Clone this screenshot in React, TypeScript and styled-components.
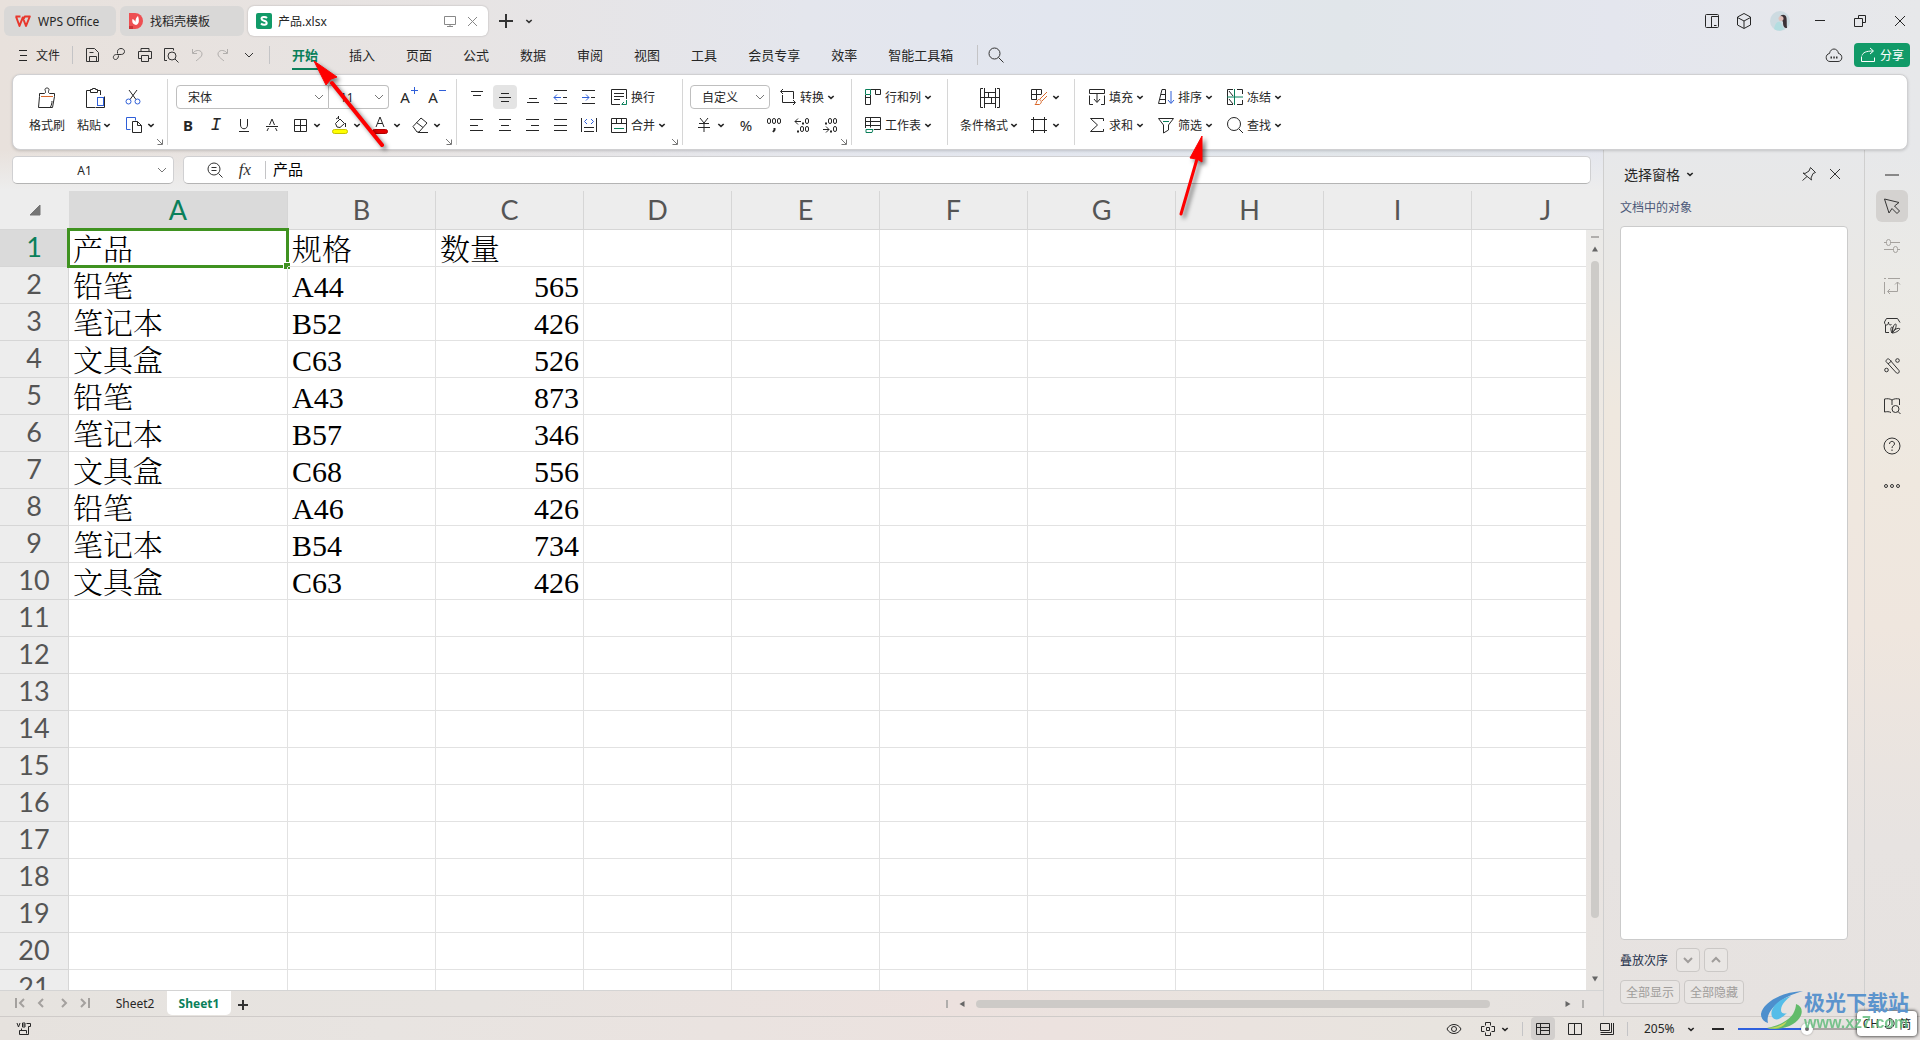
import React from "react";
import styled, { createGlobalStyle, css } from "styled-components";

const INK = "#333333";
const GREEN = "#0a7f5a";
const BLUE = "#2f5fd8";
const LINE = "#d0d0d2";

const GlobalStyle = createGlobalStyle`
  * { box-sizing: border-box; }
  body { margin: 0; }
  body, button, input, select {
    font-family: "Noto Sans", "Noto Sans CJK SC", sans-serif;
    font-size: 12px;
    color: #262626;
  }
  button {
    margin: 0; padding: 0; border: 0; background: none; cursor: pointer;
    display: inline-flex; align-items: center; justify-content: center;
    white-space: nowrap;
  }
`;

/* ---------- drawing helpers ---------- */

const Svg = styled.svg<{ $c?: string; $w?: number }>`
  display: block;
  flex: none;
  fill: none;
  stroke: ${(p) => p.$c || "currentColor"};
  stroke-width: ${(p) => p.$w || 1};
`;

type IconProps = { s?: number; w?: number; c?: string; children: React.ReactNode };
const Icon = ({ s = 20, w, c, children }: IconProps) => (
  <Svg width={s} height={s} viewBox={`0 0 ${s} ${s}`} $w={w} $c={c} aria-hidden="true">
    {children}
  </Svg>
);

const Caret = () => (
  <Svg width="10" height="10" viewBox="0 0 10 10" $w={1.6} aria-hidden="true">
    <path d="M2.300 4l2.700 2.400L7.700 4" />
  </Svg>
);
const ThinCaret = () => (
  <Svg width="12" height="12" viewBox="0 0 12 12" $c="#777" aria-hidden="true">
    <path d="M2 4l4 4 4-4" />
  </Svg>
);

/* ---------- window frame ---------- */

const Window = styled.div`
  position: relative;
  height: 100vh;
  min-height: 600px;
  display: flex;
  flex-direction: column;
  overflow: hidden;
  color: ${INK};
  background: linear-gradient(90deg, #e8e1dc 0, #e7e4e4 25%, #e4e6ed 42%, #e2e6ef 55%, #e1e6ea 70%, #e4e6ee 84%, #e7e8ea 100%);
`;

const TitleBar = styled.header`
  display: flex;
  align-items: center;
  height: 36px;
  padding: 6px 0 0 4px;
  gap: 4px;
`;

const AppTab = styled.button<{ $active?: boolean; $w: number }>`
  width: ${(p) => p.$w}px;
  height: 30px;
  padding: 0 8px;
  gap: 6px;
  justify-content: flex-start;
  border-radius: 6px;
  background: ${(p) => (p.$active ? "#ffffff" : "#d9d8d7")};
  box-shadow: ${(p) => (p.$active ? "0 0 2px rgba(0,0,0,.25)" : "none")};
`;
const TabTail = styled.span`
  display: flex;
  gap: 6px;
  margin-left: auto;
  color: #888;
`;
const BarButton = styled.button<{ $w?: number }>`
  width: ${(p) => p.$w || 26}px;
  height: 28px;
  color: ${INK};
`;
const WindowTools = styled.div`
  display: flex;
  margin-left: auto;
  align-items: center;
`;
const WindowButton = styled.button<{ $w: number }>`
  width: ${(p) => p.$w}px;
  height: 28px;
`;

const MenuBar = styled.nav`
  display: flex;
  align-items: center;
  height: 38px;
  padding: 0 10px 0 12px;
`;
const FileButton = styled.button`
  width: 60px;
  height: 28px;
  gap: 4px;
  justify-content: flex-start;
  padding-left: 2px;
`;
const VLine = styled.span<{ $h?: number }>`
  flex: none;
  width: 1px;
  height: ${(p) => p.$h || 18}px;
  background: #c4c4c6;
`;
const QuickAccess = styled.div`
  display: flex;
  padding: 0 7px;
`;
const MenuList = styled.div`
  display: flex;
  gap: 31px;
  padding: 0 24px 0 22px;
`;
const MenuItem = styled.button<{ $active?: boolean }>`
  height: 30px;
  font-size: 13px;
  line-height: 20px;
  border-bottom: 2px solid transparent;
  border-top: 2px solid transparent;
  ${(p) => p.$active && css`
    color: ${GREEN};
    font-weight: 700;
    border-bottom-color: ${GREEN};
  `}
`;
const MenuTail = styled.div`
  display: flex;
  align-items: center;
  margin-left: auto;
  gap: 7px;
`;
const ShareButton = styled.button`
  width: 56px;
  height: 24px;
  gap: 4px;
  border-radius: 4px;
  background: #119a68;
  color: #fff;
`;

/* ---------- ribbon ---------- */

const Ribbon = styled.section`
  display: flex;
  height: 76px;
  margin: 0 12px;
  background: #fff;
  border: 1px solid ${LINE};
  border-radius: 8px;
  box-shadow: 0 1px 3px rgba(0, 0, 0, 0.16);
  z-index: 1;
`;
const Group = styled.div<{ $w?: number; $pl?: number }>`
  display: flex;
  flex-direction: column;
  flex: none;
  width: ${(p) => (p.$w ? p.$w + "px" : "auto")};
  padding: 10px 0 0 ${(p) => p.$pl ?? 6}px;
`;
const Divider = styled.span`
  width: 1px;
  height: 66px;
  margin-top: 4px;
  background: #d6d6d6;
`;
const Rows = styled.div`
  display: grid;
  grid-auto-rows: 24px;
  row-gap: 4px;
  justify-items: start;
`;
const Row = styled.div<{ $gap?: number; $pl?: number }>`
  display: flex;
  align-items: center;
  gap: ${(p) => p.$gap || 0}px;
  padding-left: ${(p) => p.$pl || 0}px;
`;
const Side = styled.div<{ $gap?: number }>`
  display: flex;
  gap: ${(p) => p.$gap || 0}px;
`;
const Launcher = styled.button`
  align-self: flex-end;
  width: 10px;
  height: 10px;
  margin-right: 2px;
  color: #777;
`;
const Tool = styled.button<{ $on?: boolean }>`
  width: 28px;
  height: 24px;
  border-radius: 4px;
  ${(p) => p.$on && css`
    width: 24px;
    margin: 0 2px;
    background: #e4e4e4;
  `}
`;
const Letter = styled.span<{ $kind?: "b" | "i" }>`
  font: 15px/18px "Noto Sans", sans-serif;
  ${(p) => p.$kind === "b" && "font-weight: 700;"}
  ${(p) => p.$kind === "i" && 'font: italic 18px/18px "Liberation Mono", monospace;'}
`;
const Raised = styled.span`
  align-self: flex-start;
  margin-top: 2px;
`;
const SplitTool = styled.button`
  width: 40px;
  height: 24px;
  padding-left: 4px;
  gap: 2px;
  justify-content: flex-start;
`;
const LabelTool = styled.button`
  height: 24px;
  padding-left: 6px;
  gap: 2px;
`;
const BigTool = styled.button`
  flex-direction: column;
  justify-content: space-between;
  height: 52px;
  padding: 0 4px;
`;
const BigIcon = styled.span`
  display: flex;
  align-items: center;
  height: 26px;
`;
const BigLabel = styled.span`
  display: flex;
  align-items: center;
  height: 24px;
  gap: 1px;
`;

const SelectBox = styled.label<{ $w: number; $edge?: "l" | "r" }>`
  display: grid;
  align-items: center;
  width: ${(p) => p.$w}px;
  height: 24px;
  background: #fff;
  border: 1px solid #bfbfbf;
  border-radius: ${(p) => (p.$edge === "l" ? "4px 0 0 4px" : p.$edge === "r" ? "0 4px 4px 0" : "4px")};
  ${(p) => p.$edge === "r" && "border-left: 0;"}
  & > * { grid-area: 1 / 1; }
  & > svg { justify-self: end; margin-right: 3px; pointer-events: none; }
`;
const Select = styled.select`
  appearance: none;
  width: 100%;
  height: 22px;
  padding: 0 0 0 11px;
  border: 0;
  outline: 0;
  background: transparent;
`;

/* ---------- body ---------- */

const Body = styled.div`
  display: flex;
  flex: 1;
  min-height: 0;
`;
const Editor = styled.main`
  display: flex;
  flex-direction: column;
  flex: 1;
  min-width: 0;
  background: linear-gradient(180deg, rgba(237, 237, 237, 0) 0, #ededed 40px);
`;
const FormulaRow = styled.div`
  display: flex;
  gap: 9px;
  padding: 6px 12px 7px;
`;
const FieldBox = styled.div<{ $w?: number }>`
  display: flex;
  align-items: center;
  height: 28px;
  ${(p) => (p.$w ? `width: ${p.$w}px;` : "flex: 1; padding-left: 17px; gap: 2px;")}
  background: #fff;
  border: 1px solid ${LINE};
  border-bottom-color: #b4b4b4;
  border-radius: 5px;
`;
const NameInput = styled.input`
  flex: 1;
  min-width: 0;
  padding: 0 0 0 5px;
  border: 0;
  outline: 0;
  background: none;
  text-align: center;
`;
const FormulaInput = styled.input`
  flex: 1;
  height: 26px;
  padding: 0 5px 4px;
  border: 0;
  outline: 0;
  background: none;
  font-size: 15px;
  color: #000;
`;
const Fx = styled.span`
  font: italic 17px/20px "Liberation Serif", serif;
`;

const SheetArea = styled.div`
  display: flex;
  flex: 1;
  min-height: 0;
`;
const Canvas = styled.div`
  flex: 1;
  min-width: 0;
  overflow: hidden;
  background: #fff;
`;
const Table = styled.table`
  width: 1472px;
  min-width: 100%;
  table-layout: fixed;
  border-collapse: separate;
  border-spacing: 0;
`;
const headFont = css`
  font: 400 27px/34px Lato, "Noto Sans", sans-serif;
  text-align: center;
  border-right: 1px solid #d6d6d6;
  border-bottom: 1px solid #d6d6d6;
`;
const ColHead = styled.th<{ $on?: boolean }>`
  ${headFont}
  height: 39px;
  padding: 0;
  background: ${(p) => (p.$on ? "#dadada" : "#ededed")};
  color: ${(p) => (p.$on ? GREEN : "#555")};
`;
const Corner = styled.th`
  background: #ededed;
  border-bottom: 1px solid #d6d6d6;
  padding: 0 0 0 28px;
`;
const RowHead = styled.th<{ $on?: boolean }>`
  ${headFont}
  height: 37px;
  padding: 0 0 2px;
  background: ${(p) => (p.$on ? "#dadada" : "#ededed")};
  color: ${(p) => (p.$on ? GREEN : "#555")};
`;
const Cell = styled.td<{ $num?: boolean; $on?: boolean }>`
  position: relative;
  height: 37px;
  padding: 4px 4px 0;
  border-right: 1px solid #e2e2e2;
  border-bottom: 1px solid #e2e2e2;
  font: 300 30px/32px "Liberation Serif", "Noto Serif CJK SC", "Noto Sans CJK SC", serif;
  text-align: ${(p) => (p.$num ? "right" : "left")};
  white-space: nowrap;
  color: #000;
  ${(p) => p.$on && css`
    &::before {
      content: "";
      position: absolute;
      inset: -2px;
      border: 3px solid #3f9220;
    }
    &::after {
      content: "";
      position: absolute;
      right: -3px;
      bottom: -3px;
      width: 6px;
      height: 6px;
      background: #3f9220;
      border: 1px solid #fff;
      border-width: 1px 0 0 1px;
    }
  `}
`;
const VScroll = styled.div`
  display: flex;
  flex-direction: column;
  align-items: center;
  width: 17px;
  padding-bottom: 4px;
  background: linear-gradient(180deg, #ebeae8 39px, #efe8e0 40%, #ece3e0 60%, #e7e4e1);
`;
const HeadCap = styled.span`
  width: 100%;
  height: 39px;
  background: #ededed;
  border-bottom: 1px solid #d6d6d6;
`;
const SplitMark = styled.span<{ $v?: boolean }>`
  flex: none;
  width: ${(p) => (p.$v ? 2 : 8)}px;
  height: ${(p) => (p.$v ? 8 : 2)}px;
  margin: ${(p) => (p.$v ? "0" : "6px 0 4px")};
  background: #b0aeac;
`;
const ArrowButton = styled.button`
  width: 14px;
  height: 14px;
  color: #666;
`;
const VTrack = styled.div`
  flex: 1;
  margin: 5px 0;
`;
const VThumb = styled.div`
  width: 8px;
  height: 93%;
  border-radius: 4px;
  background: #cdcbc8;
`;

const SheetBar = styled.div`
  display: flex;
  height: 26px;
  border-top: 1px solid #d4d4d4;
  background: linear-gradient(90deg, #e6e3df 0, #e7e3e0 30%, #ece1de 60%, #e8e4df 85%, #e6e2e0);
`;
const SheetNav = styled.div`
  display: flex;
  padding-left: 9px;
`;
const NavButton = styled.button`
  width: 22px;
  height: 24px;
  color: #a4a19e;
`;
const SheetTab = styled.button<{ $active?: boolean }>`
  width: 64px;
  height: 24px;
  ${(p) => p.$active && css`
    background: #fff;
    border-radius: 0 0 5px 5px;
    color: ${GREEN};
    font-weight: 700;
  `}
`;
const SheetTabs = styled.div`
  display: flex;
  padding-left: 6px;
`;
const HScroll = styled.div`
  display: flex;
  align-items: center;
  width: 41%;
  margin-left: auto;
  padding-right: 19px;
  gap: 7px;
`;
const HTrack = styled.div`
  flex: 1;
`;
const HThumb = styled.div`
  width: 89%;
  height: 8px;
  border-radius: 4px;
  background: #cdcac7;
`;

/* ---------- task pane ---------- */

const Pane = styled.aside`
  display: flex;
  flex-direction: column;
  width: 261px;
  padding: 10px 16px 12px;
  gap: 8px;
  border-left: 1px solid #cfcfcf;
  background: linear-gradient(180deg, #e7e8ea 0, #e9e8e6 12%, #efe8df 30%, #efe6df 55%, #e7e3e1 80%, #e6e2e0);
`;
const PaneHead = styled.div`
  display: flex;
  align-items: center;
  height: 28px;
  padding-left: 4px;
`;
const PaneTitle = styled.button`
  font-size: 14px;
  gap: 5px;
  margin-right: auto;
`;
const PaneLabel = styled.h2`
  margin: 0;
  padding-top: 2px;
  font-size: 12px;
  font-weight: 400;
  line-height: 20px;
  color: #4c5878;
`;
const ObjectList = styled.div`
  flex: 1;
  background: #fff;
  border: 1px solid #cbcbcb;
  border-radius: 4px;
`;
const PaneRow = styled.div`
  display: flex;
  align-items: center;
  gap: 4px;
  color: #24304a;
`;
const PaneButton = styled.button<{ $w: number }>`
  width: ${(p) => p.$w}px;
  height: 24px;
  border: 1px solid #cbc8c6;
  border-radius: 4px;
  background: #e9e6e4;
  color: #a09d9b;
`;
const OrderLabel = styled.span`
  margin-right: 4px;
`;

const SideBar = styled.aside`
  display: flex;
  flex-direction: column;
  align-items: center;
  width: 56px;
  padding: 16px 1px 0 0;
  gap: 8px;
  border-left: 1px solid #cfcfcf;
  background: linear-gradient(180deg, #e7e8ea 0, #ebeae6 15%, #efe8df 38%, #efe6de 55%, #e7e3e1 80%, #e6e2e0);
`;
const SideButton = styled.button<{ $on?: boolean; $h?: number; $off?: boolean }>`
  width: 32px;
  height: ${(p) => p.$h || 32}px;
  border-radius: 6px;
  background: ${(p) => (p.$on ? "#d4d2d0" : "none")};
  color: ${(p) => (p.$off ? "#a5a29e" : INK)};
`;

/* ---------- status bar ---------- */

const StatusBar = styled.footer`
  display: flex;
  align-items: center;
  height: 24px;
  padding: 0 12px;
  gap: 8px;
  border-top: 1px solid #cfcbc9;
  background: linear-gradient(90deg, #e6e2de 0, #e8e4e1 20%, #ece2df 55%, #e8e4df 75%, #e6e2e0);
`;
const StatusButton = styled.button<{ $on?: boolean; $push?: boolean }>`
  width: 24px;
  height: 23px;
  border-radius: 4px;
  background: ${(p) => (p.$on ? "#d2cfcd" : "none")};
  ${(p) => p.$push && "margin-left: auto;"}
`;
const ZoomButton = styled.button`
  width: 62px;
  justify-content: space-between;
  padding: 0 2px 0 8px;
`;
const ZoomRange = styled.input`
  appearance: none;
  width: 138px;
  height: 12px;
  margin: 0;
  background: linear-gradient(90deg, #2f60dd 50%, #a9a6a4 50%) center / 100% 2px no-repeat;
  &::-webkit-slider-thumb {
    appearance: none;
    width: 12px;
    height: 12px;
    border-radius: 50%;
    border: 4px solid #fff;
    background: #6b6b6b;
    box-shadow: 0 0 2px rgba(0, 0, 0, 0.35);
  }
`;

/* ---------- overlays ---------- */

const Pointer = styled.svg<{ $x: number; $y: number }>`
  position: absolute;
  left: ${(p) => p.$x}px;
  top: ${(p) => p.$y}px;
  z-index: 3;
  pointer-events: none;
  overflow: visible;
  filter: drop-shadow(3px 3px 2px rgba(0, 0, 0, 0.5));
`;
const Watermark = styled.div`
  position: absolute;
  right: 11px;
  bottom: 8px;
  z-index: 4;
  display: flex;
  align-items: flex-end;
  pointer-events: none;
`;
const WatermarkText = styled.div`
  display: flex;
  flex-direction: column;
  font: 700 21px/26px "Noto Sans CJK SC", sans-serif;
  color: #5c94cd;
`;
const WatermarkUrl = styled.span`
  font: 700 16px/18px "Liberation Sans", sans-serif;
  color: #5cba78;
  opacity: 0.8;
`;
const ImeBadge = styled.div`
  position: absolute;
  right: 3px;
  bottom: 4px;
  z-index: 3;
  display: flex;
  align-items: center;
  justify-content: center;
  gap: 3px;
  width: 60px;
  height: 25px;
  border-radius: 4px;
  background: #fff;
  box-shadow: 0 0 3px 1px rgba(0, 0, 0, 0.6);
  color: #222;
`;

/* ---------- small icon set ---------- */

const Close = ({ s = 12, c }: { s?: number; c?: string }) => (
  <Icon s={s} c={c}><path d={`M1 1L${s - 1} ${s - 1}M${s - 1} 1L1 ${s - 1}`} /></Icon>
);
const Search = () => (
  <Icon s={18}><circle cx="7.500" cy="7.500" r="5.500" /><path d="M11.500 11.500l5 5" /></Icon>
);
const Lines = ({ d, children }: { d: string; children?: React.ReactNode }) => (
  <Icon s={18} w={1}><path d={d} />{children}</Icon>
);
const Zero = ({ x, y }: { x: number; y: number }) => <rect x={x} y={y} width="3" height="5" rx="1.500" />;
const Launch = ({ label }: { label: string }) => (
  <Launcher aria-label={label}><Icon s={8}><path d="M1 1l5 5M6.500 1.500v5h-5" /></Icon></Launcher>
);

/* ---------- data ---------- */

const MENUS = ["开始", "插入", "页面", "公式", "数据", "审阅", "视图", "工具", "会员专享", "效率", "智能工具箱"];
const COLUMNS = ["A", "B", "C", "D", "E", "F", "G", "H", "I", "J"];
const DATA: string[][] = [
  ["产品", "规格", "数量"],
  ["铅笔", "A44", "565"],
  ["笔记本", "B52", "426"],
  ["文具盒", "C63", "526"],
  ["铅笔", "A43", "873"],
  ["笔记本", "B57", "346"],
  ["文具盒", "C68", "556"],
  ["铅笔", "A46", "426"],
  ["笔记本", "B54", "734"],
  ["文具盒", "C63", "426"],
];
const ROW_COUNT = 21;

/* ---------- sections ---------- */

const Title = () => (
  <TitleBar>
    <AppTab $w={112}>
      <Svg width="20" height="16" viewBox="0 0 20 16" aria-hidden="true" $w={2}>
        <path d="M3.500 3.500h5M4 3.500L7.500 13l3.200-8.500L14 13l3.800-9.500h-5l-2.100 4" stroke="#e8372c" strokeLinejoin="round" />
      </Svg>
      WPS Office
    </AppTab>
    <AppTab $w={124}>
      <Svg width="16" height="18" viewBox="0 0 16 18" aria-hidden="true">
        <path d="M1 1h6a8 8 0 0 1 0 16H1z" fill="#ee4f52" stroke="none" />
        <path d="M1 14h4v3H1z" fill="#c93436" stroke="none" />
        <path d="M8 13c-4-1-4-4-3.500-6C6 7.500 7 8.500 7.300 10 7.500 7 8.500 5 10 4c1 3 2 8-2 9z" fill="#fff" stroke="none" />
      </Svg>
      找稻壳模板
    </AppTab>
    <AppTab $w={240} $active>
      <Svg width="16" height="16" viewBox="0 0 16 16" aria-hidden="true">
        <rect width="16" height="16" rx="2" fill="#119a68" stroke="none" />
        <path d="M11 5C9.500 3.500 5.500 3.600 5.500 5.800c0 2.500 5.200 1.500 5.200 4.200 0 2.300-4 2.300-5.700.5" stroke="#fff" strokeWidth="2" />
      </Svg>
      产品.xlsx
      <TabTail>
        <Icon s={16}><path d="M2.500 3.500h11v8h-11zM8 11.500v2M5 13.500h6" /></Icon>
        <Icon s={16}><path d="M4 4l9 9M13 4l-9 9" /></Icon>
      </TabTail>
    </AppTab>
    <BarButton $w={28} aria-label="新建"><Icon s={16} w={2}><path d="M8 1v14M1 8h14" /></Icon></BarButton>
    <BarButton aria-label="更多" $w={10}><Caret /></BarButton>
    <WindowTools>
      <WindowButton $w={32} aria-label="侧栏">
        <Icon s={16}><rect x="1.500" y="1.500" width="13" height="13" rx="1" /><path d="M7.500 14.500v-11h7M10 12.500h2.500" /></Icon>
      </WindowButton>
      <WindowButton $w={32} aria-label="应用">
        <Icon s={18}><path d="M9 1.500l6.500 3.500v8L9 16.500 2.500 13V5zM2.500 5.500L9 9l6.500-3.500M9 9v7" /></Icon>
      </WindowButton>
      <WindowButton $w={40} aria-label="账户">
        <Icon s={20}>
          <circle cx="10" cy="10" r="10" fill="#cddbe1" stroke="none" />
          <path d="M4 18c1-5 3-8 6-7l4 7c-3 2-7 2-10 0z" fill="#b3dde0" stroke="none" />
          <path d="M10 6c1-3 6-3 6.500 1 .5 4 0 6 .5 10-3 0-4-2-4-6z" fill="#3a3136" stroke="none" />
          <circle cx="11" cy="7.500" r="2.500" fill="#e0c0ba" stroke="none" />
        </Icon>
      </WindowButton>
      <WindowButton $w={40} aria-label="最小化"><Icon s={12}><path d="M1 5.500h10" /></Icon></WindowButton>
      <WindowButton $w={40} aria-label="还原">
        <Icon s={14}><path d="M1.500 4.500h8v8h-8zM5.500 4.500v-3h7v7h-3" /></Icon>
      </WindowButton>
      <WindowButton $w={40} aria-label="关闭"><Close /></WindowButton>
    </WindowTools>
  </TitleBar>
);

const Menu = () => (
  <MenuBar>
    <FileButton>
      <Icon s={18}><path d="M5 4.500h8M6 9.500h7M5 14.500h8" /></Icon>
      文件
    </FileButton>
    <VLine />
    <QuickAccess>
      <BarButton aria-label="保存">
        <Icon s={18}><path d="M2.500 2.500h8l4 4v9h-12zM5.500 15v-4.500h7V15M5.500 6.500h4" /></Icon>
      </BarButton>
      <BarButton aria-label="输出为PDF">
        <Icon s={18}><path d="M7.500 7.500v-2c0-4 7-4 7 0 0 3-3 3-4.500 3H6.500c-4 0-4 5-1 5 2 0 3-2 3-4" /></Icon>
      </BarButton>
      <BarButton aria-label="打印">
        <Icon s={18}><path d="M5 5.500v-3h8v3M5 12.500H2.500v-7h13v7H13M5.500 9.500h7v6h-7z" /></Icon>
      </BarButton>
      <BarButton aria-label="打印预览">
        <Icon s={18}><path d="M5 14.500H2.500v-12h9v2" /><circle cx="10" cy="10" r="4" /><path d="M13 13l3.500 3.500" /></Icon>
      </BarButton>
      <BarButton aria-label="撤销">
        <Icon s={18} c="#b1aeac"><path d="M4.500 3v4.500H9M5 7c3-4 9-3 9 1 0 3-4 5-6 7" /></Icon>
      </BarButton>
      <BarButton aria-label="恢复">
        <Icon s={18} c="#b1aeac"><path d="M13.500 3v4.500H9M13 7C10 3 4 4 4 8c0 3 4 5 6 7" /></Icon>
      </BarButton>
      <BarButton aria-label="自定义快速访问"><Icon s={12}><path d="M2 4l4 4 4-4" /></Icon></BarButton>
    </QuickAccess>
    <VLine />
    <MenuList>
      {MENUS.map((m, i) => <MenuItem key={m} $active={i === 0}>{m}</MenuItem>)}
    </MenuList>
    <VLine $h={20} />
    <BarButton $w={36} aria-label="查找命令"><Search /></BarButton>
    <MenuTail>
      <BarButton aria-label="云同步">
        <Icon s={18}>
          <path d="M5 15.500C0 15.500 0 8 4.500 7.500 5.500 1.500 12.500 1.500 13.500 7.500 18 8 18 15.500 13 15.500z" />
          <path d="M5.500 11.500h1.500M8.300 11.500h1.500M11 11.500h1.500" strokeWidth="2" />
        </Icon>
      </BarButton>
      <ShareButton>
        <Icon s={16}><path d="M1.500 9.500v5h13v-4M2 8.500c1-3 4-4.500 11-4.500M10 1l3.500 3L10 7" /></Icon>
        分享
      </ShareButton>
    </MenuTail>
  </MenuBar>
);

const ClipboardGroup = () => (
  <Group $w={154} $pl={12}>
    <Side $gap={4}>
      <BigTool>
        <BigIcon>
          <Icon s={22}>
            <path d="M3.500 9.500v-3h5c2-1 .5-3 .5-4 0-2 4-2 4 0 0 1-1.500 3 .5 4h5v3M3.500 9.500L2.500 20.500h14l2-11M14.500 20c1-2 1.500-4 1.500-6" />
            <path d="M5 9.500h12" stroke="#d9682a" />
          </Icon>
        </BigIcon>
        <BigLabel>格式刷</BigLabel>
      </BigTool>
      <BigTool>
        <BigIcon>
          <Icon s={22}>
            <path d="M7 3.500H2.500v17H11M13 3.500h3.500V8M6.500 5.500v-3h2v-1h3v1h2v3zM11.500 20.500h9v-11" />
            <rect x="13.500" y="10.500" width="6" height="8" stroke={BLUE} />
          </Icon>
        </BigIcon>
        <BigLabel>粘贴<Caret /></BigLabel>
      </BigTool>
      <Rows>
        <Tool aria-label="剪切">
          <Icon s={18}>
            <path d="M4 2l7 9.500M12 2L5 11.500" />
            <circle cx="3.500" cy="13.500" r="2.500" stroke={BLUE} /><circle cx="12.500" cy="13.500" r="2.500" stroke={BLUE} />
          </Icon>
        </Tool>
        <SplitTool aria-label="复制">
          <Icon s={20}>
            <path d="M6.500 14.500h-4v-12h9v3" stroke={BLUE} />
            <path d="M8.500 6.500h5l4 4v7h-9zM13.500 6.500v4h4" />
          </Icon>
          <Caret />
        </SplitTool>
      </Rows>
    </Side>
    <Launch label="剪贴板" />
  </Group>
);

const FontGroup = () => (
  <Group $w={288}>
    <Rows>
      <Row $pl={2}>
        <SelectBox $w={153} $edge="l">
          <Select aria-label="字体" defaultValue="宋体"><option>宋体</option></Select>
          <ThinCaret />
        </SelectBox>
        <SelectBox $w={60} $edge="r">
          <Select aria-label="字号" defaultValue="11"><option>11</option></Select>
          <ThinCaret />
        </SelectBox>
        <Row $pl={6}>
          <Tool aria-label="增大字号">
            <Letter>A</Letter><Raised><Icon s={8} c={BLUE}><path d="M4.500 0v7M1 3.500h7" /></Icon></Raised>
          </Tool>
          <Tool aria-label="减小字号">
            <Letter>A</Letter><Raised><Icon s={8} c={BLUE}><path d="M1 3.500h7" /></Icon></Raised>
          </Tool>
        </Row>
      </Row>
      <Row>
        <Tool aria-label="加粗"><Letter $kind="b">B</Letter></Tool>
        <Tool aria-label="倾斜"><Letter $kind="i">I</Letter></Tool>
        <Tool aria-label="下划线"><Icon s={16}><path d="M4.500 2v6c0 5 7 5 7 0V2M3 14.500h10" /></Icon></Tool>
        <Tool aria-label="删除线"><Icon s={16}><path d="M2 9.500h12M8 2L5.500 8M8 2l2.500 6M4.500 11L3 14M11.500 11l1.500 3" /></Icon></Tool>
        <SplitTool aria-label="边框"><Icon><path d="M4.500 4.500h12v12h-12zM10.500 4.500v12M4.500 10.500h12" /></Icon><Caret /></SplitTool>
        <SplitTool aria-label="填充颜色">
          <Icon>
            <path d="M6 4l3-2M8.500 1v3M5.500 8.500L10 4l4.500 4.500L10 12.500 7 12zM15.500 8v4" />
            <rect x="2.500" y="14.500" width="15" height="4" rx="2" fill="#ffff00" stroke="#c9c400" />
          </Icon>
          <Caret />
        </SplitTool>
        <SplitTool aria-label="字体颜色">
          <Icon>
            <path d="M6 12l4-10 4 10M7.500 8.500h5" />
            <rect x="2.500" y="14.500" width="15" height="4" rx="2" fill="#e60000" stroke="#b00000" />
          </Icon>
          <Caret />
        </SplitTool>
        <SplitTool aria-label="清除">
          <Icon><path d="M3 11.500L11 3l6 5-8 9H7zM6.500 7.500l6.500 5M8 17.500h10" /></Icon>
          <Caret />
        </SplitTool>
      </Row>
    </Rows>
    <Launch label="字体设置" />
  </Group>
);

const AlignGroup = () => (
  <Group $w={225}>
    <Rows>
      <Row>
        <Tool aria-label="顶端对齐"><Lines d="M3 3.500h12M5 7.500h8" /></Tool>
        <Tool aria-label="垂直居中" $on><Lines d="M5 5.500h8M3 9.500h12M5 13.500h8" /></Tool>
        <Tool aria-label="底端对齐"><Lines d="M5 10.500h8M3 14.500h12" /></Tool>
        <Tool aria-label="减少缩进"><Lines d="M2 2.500h13M11 9.500h4M2 15.500h13"><path d="M2 9.500h7M5 6.500l-3 3 3 3" stroke={BLUE} /></Lines></Tool>
        <Tool aria-label="增加缩进"><Lines d="M2 2.500h13M11 9.500h4M2 15.500h13"><path d="M2 9.500h7M6 6.500l3 3-3 3" stroke={BLUE} /></Lines></Tool>
        <LabelTool>
          <Icon><path d="M11 17.500H2.500v-15h15V12M5 6.500h10M5 9.500h10M5 12.500h6" /><path d="M17.500 13v4.500H13M15 15l-2.500 2.500" stroke={GREEN} /></Icon>
          换行
        </LabelTool>
      </Row>
      <Row>
        <Tool aria-label="左对齐"><Lines d="M2 3.500h13M2 9.500h8M2 14.500h13" /></Tool>
        <Tool aria-label="水平居中"><Lines d="M3 3.500h12M5 9.500h8M3 14.500h12" /></Tool>
        <Tool aria-label="右对齐"><Lines d="M2 3.500h13M7 9.500h8M2 14.500h13" /></Tool>
        <Tool aria-label="两端对齐"><Lines d="M2 3.500h13M2 9.500h13M2 14.500h13" /></Tool>
        <Tool aria-label="分散对齐">
          <Lines d="M1.500 2v14M16.500 2v14M4 11.500h10M4 15.500h10"><path d="M7 3L4.500 5.500 7 8M11 3l2.500 2.500L11 8" stroke={BLUE} /></Lines>
        </Tool>
        <LabelTool>
          <Icon><path d="M2.500 3.500h15v14h-15zM2.500 8.500h15M7.500 3.500v5M12.500 3.500v5" /><path d="M5 13.500h10" stroke={GREEN} /></Icon>
          合并<Caret />
        </LabelTool>
      </Row>
    </Rows>
    <Launch label="对齐设置" />
  </Group>
);

const NumberGroup = () => (
  <Group $w={168} $pl={7}>
    <Rows>
      <Row $gap={2}>
        <SelectBox $w={80}>
          <Select aria-label="数字格式" defaultValue="自定义"><option>自定义</option></Select>
          <ThinCaret />
        </SelectBox>
        <LabelTool>
          <Icon><path d="M5 2L2.500 4.500 5 7M3 4.500h12.500V12M4.500 8v7.500H17M15 13l2.500 2.500L15 18" /></Icon>
          转换<Caret />
        </LabelTool>
      </Row>
      <Row $gap={2}>
        <SplitTool aria-label="货币格式">
          <Icon><path d="M6 3l4 5 4-5M5 8.500h10M4 12.500h12M10 8v9" /></Icon><Caret />
        </SplitTool>
        <Row>
          <Tool aria-label="百分比"><Letter>%</Letter></Tool>
          <Tool aria-label="千位分隔">
            <Icon s={16}><Zero x={1.5} y={1.5} /><Zero x={6.5} y={1.5} /><Zero x={11.5} y={1.5} /><path d="M8.500 11v2l-1.500 2" strokeWidth="2" /></Icon>
          </Tool>
          <Tool aria-label="增加小数位">
            <Icon s={16}>
              <path d="M1 4.500h6M4 1.500l-3 3 3 3" /><path d="M8 6.500h2M3 14.500h2" strokeWidth="2" />
              <Zero x={11.5} y={1.5} /><Zero x={6.5} y={9.5} /><Zero x={11.5} y={9.5} />
            </Icon>
          </Tool>
          <Tool aria-label="减少小数位">
            <Icon s={16}>
              <path d="M1 12.500h6M4 9.500l3 3-3 3" /><path d="M8 14.500h2M3 6.500h2" strokeWidth="2" />
              <Zero x={6.5} y={1.5} /><Zero x={11.5} y={1.5} /><Zero x={11.5} y={9.5} />
            </Icon>
          </Tool>
        </Row>
      </Row>
    </Rows>
    <Launch label="数字格式设置" />
  </Group>
);

const RowsColsGroup = () => (
  <Group $w={95} $pl={5}>
    <Rows>
      <LabelTool>
        <Icon><path d="M7.500 2.500h10v5h-5v-5M2.500 10.500h5v7h-5z" /><path d="M2.500 2.500h5v5h-5z" stroke={GREEN} /><path d="M2.500 8v3M7.500 8v3" /></Icon>
        行和列<Caret />
      </LabelTool>
      <LabelTool>
        <Icon><path d="M2.500 13V2.500h15v12H11M2.500 6.500h15M7.500 2.500v10M2.500 10.500h15" /><path d="M3 14.500h7l-1 3H3z" stroke={GREEN} /></Icon>
        工作表<Caret />
      </LabelTool>
    </Rows>
  </Group>
);

const StyleGroup = () => (
  <Group $w={126} $pl={8}>
    <Side $gap={2}>
      <BigTool>
        <BigIcon>
          <Icon s={22}><path d="M4 1.500H1.500v19H4M18 1.500h2.500v19H18M5.500 1v20M16.500 1v20M5.500 5.500h11M5.500 10.500h11M5.500 16.500h11M9.500 5.500v5M12.500 10.500v6M1.500 10.500h4M16.500 10.500h4" /></Icon>
        </BigIcon>
        <BigLabel>条件格式<Caret /></BigLabel>
      </BigTool>
      <Rows>
        <SplitTool aria-label="表格样式">
          <Icon><path d="M8 12.500H2.500v-10h10V7M2.500 7.500h10M7.500 2.500v10" /><path d="M18 5l-7 7M18 9l-5 5M6 17.500c2-1 1-4 3.500-5 3 0 4 3 1 5z" stroke="#d9682a" /></Icon>
          <Caret />
        </SplitTool>
        <SplitTool aria-label="单元格样式"><Icon><path d="M4.500 2v16M15.500 2v16M2 4.500h16M2 15.500h16" /></Icon><Caret /></SplitTool>
      </Rows>
    </Side>
  </Group>
);

const EditGroup = () => (
  <Group>
    <Rows>
      <Row $gap={5}>
        <LabelTool>
          <Icon><path d="M6 17.500H2.500v-9M2.500 6.500v-4h15v4h-15M17.500 8.500v9H14M10 7v8M7 12l3 3.500 3-3.500" /></Icon>填充<Caret />
        </LabelTool>
        <LabelTool>
          <Icon><path d="M2.500 16.500L6 2.500h3.500v14zM5 7.500h4M4 12.500h5" /><path d="M15 4v12M12 13l3 3.500 3-3.500" stroke={BLUE} /></Icon>排序<Caret />
        </LabelTool>
        <LabelTool>
          <Icon><path d="M8 2.500H2.500v15H8M12 2.500h5.500V7M12 17.500h5.500V13M4 4l4 5M4 12l4 5" /><path d="M2 10h16M9.500 2v16" stroke={GREEN} /></Icon>冻结<Caret />
        </LabelTool>
      </Row>
      <Row $gap={5}>
        <LabelTool>
          <Icon><path d="M16.500 6V3.500h-13l7 6.500-7 6.500h13V14" /></Icon>求和<Caret />
        </LabelTool>
        <LabelTool>
          <Icon><path d="M2.500 3.500h15L12.500 10v5l-5 3v-8z" /><path d="M7 6.500h6" stroke={GREEN} /></Icon>筛选<Caret />
        </LabelTool>
        <LabelTool>
          <Icon><circle cx="9" cy="9" r="6.500" /><path d="M14 14l4 4" /></Icon>查找<Caret />
        </LabelTool>
      </Row>
    </Rows>
  </Group>
);

const Sheet = () => (
  <SheetArea>
    <Canvas>
      <Table>
        <colgroup>
          <col style={{ width: 69 }} />
          {COLUMNS.map((c) => <col key={c} style={{ width: c === "A" ? 219 : 148 }} />)}
        </colgroup>
        <thead>
          <tr>
            <Corner scope="col" aria-label="全选">
              <Svg width="14" height="12" viewBox="0 0 14 12" aria-hidden="true">
                <path d="M12 1v10H2z" fill="#757575" stroke="#757575" strokeLinejoin="round" />
              </Svg>
            </Corner>
            {COLUMNS.map((c) => <ColHead key={c} scope="col" $on={c === "A"}>{c}</ColHead>)}
          </tr>
        </thead>
        <tbody>
          {Array.from({ length: ROW_COUNT }, (_, r) => (
            <tr key={r}>
              <RowHead scope="row" $on={r === 0}>{r + 1}</RowHead>
              {COLUMNS.map((c, i) => (
                <Cell key={c} $num={r > 0 && i === 2} $on={r === 0 && i === 0}>{DATA[r]?.[i] ?? ""}</Cell>
              ))}
            </tr>
          ))}
        </tbody>
      </Table>
    </Canvas>
    <VScroll>
      <HeadCap />
      <SplitMark />
      <ArrowButton aria-label="向上滚动"><Icon s={8}><path d="M4 1.500L7 6.500H1z" fill="#666" stroke="none" /></Icon></ArrowButton>
      <VTrack><VThumb /></VTrack>
      <ArrowButton aria-label="向下滚动"><Icon s={8}><path d="M4 6.500L7 1.500H1z" fill="#666" stroke="none" /></Icon></ArrowButton>
    </VScroll>
  </SheetArea>
);

const Tabs = () => (
  <SheetBar>
    <SheetNav>
      <NavButton aria-label="第一个工作表"><Icon s={12} w={2}><path d="M2 1v10M10 2L6 6l4 4" /></Icon></NavButton>
      <NavButton aria-label="上一个工作表"><Icon s={12} w={2}><path d="M7 2L3 6l4 4" /></Icon></NavButton>
      <NavButton aria-label="下一个工作表"><Icon s={12} w={2}><path d="M4 2l4 4-4 4" /></Icon></NavButton>
      <NavButton aria-label="最后一个工作表"><Icon s={12} w={2}><path d="M9 1v10M1 2l4 4-4 4" /></Icon></NavButton>
    </SheetNav>
    <SheetTabs>
      <SheetTab>Sheet2</SheetTab>
      <SheetTab $active>Sheet1</SheetTab>
    </SheetTabs>
    <BarButton $w={24} aria-label="新建工作表"><Icon s={12} w={2}><path d="M6 1v10M1 6h10" /></Icon></BarButton>
    <HScroll>
      <SplitMark $v />
      <ArrowButton aria-label="向左滚动"><Icon s={8}><path d="M1.500 4L6.500 1v6z" fill="#666" stroke="none" /></Icon></ArrowButton>
      <HTrack><HThumb /></HTrack>
      <ArrowButton aria-label="向右滚动"><Icon s={8}><path d="M6.500 4L1.500 1v6z" fill="#666" stroke="none" /></Icon></ArrowButton>
      <SplitMark $v />
    </HScroll>
  </SheetBar>
);

const SelectionPane = () => (
  <Pane>
    <PaneHead>
      <PaneTitle>选择窗格<Caret /></PaneTitle>
      <BarButton aria-label="固定">
        <Icon s={16}><path d="M9.500 1.500l5 5-2.500 1-2 4.500.500 2-8.500-7 2 .500L8 5zM6 10.500L1.500 14.500" /></Icon>
      </BarButton>
      <BarButton aria-label="关闭窗格"><Close /></BarButton>
    </PaneHead>
    <PaneLabel>文档中的对象</PaneLabel>
    <ObjectList role="listbox" aria-label="文档中的对象" />
    <PaneRow>
      <OrderLabel>叠放次序</OrderLabel>
      <PaneButton $w={24} aria-label="下移一层"><Icon s={12} w={2}><path d="M2 4l4 4 4-4" /></Icon></PaneButton>
      <PaneButton $w={24} aria-label="上移一层"><Icon s={12} w={2}><path d="M2 8l4-4 4 4" /></Icon></PaneButton>
    </PaneRow>
    <PaneRow>
      <PaneButton $w={60}>全部显示</PaneButton>
      <PaneButton $w={60}>全部隐藏</PaneButton>
    </PaneRow>
  </Pane>
);

const Tools = () => (
  <SideBar>
    <SideButton $h={16} aria-label="收起"><Icon s={14} w={2} c="#888"><path d="M0 8h14" /></Icon></SideButton>
    <SideButton $on aria-label="选择">
      <Icon s={18}><path d="M1.500 2L16 5.500 11.500 9l5 5-2.500 2.500-5-5L6 16z" /></Icon>
    </SideButton>
    <SideButton $off aria-label="属性">
      <Icon s={18}><path d="M1 5.500h2.500M8 5.500h9M1 12.500h9.500M15 12.500h2" /><rect x="3.500" y="2.500" width="4" height="6" rx="2" /><rect x="10.500" y="9.500" width="4" height="6" rx="2" /></Icon>
    </SideButton>
    <SideButton $off aria-label="分析">
      <Icon s={18}><path d="M1.500 5v12M5 1.500h12M1 1.500h2M14.500 5v9.500H5M12 7.500L14.500 5 17 7.500M7 12l-2.500 2.500L7 17" /></Icon>
    </SideButton>
    <SideButton aria-label="稻壳资源">
      <Icon s={18}><path d="M2.500 8v7.500H6M3.500 1.500h11l2.500 4M3.500 1.500L1.500 5c0 4 4 4 4 0 0 3 2 4 3 2" /><path d="M9 16c-2-4-1-6 0-6s1 3 0 6c0-4 2-9 3.500-9s.5 6-3.500 9c2-4 6-5 7.500-4.500s-3 4.500-7.500 4.500" /></Icon>
    </SideButton>
    <SideButton aria-label="美化">
      <Icon s={18}><path d="M3 4.500c0-2 2-3.500 3.500-2l9.500 11c1 2-1 3.500-2.500 2.500zM5 7l3.500-3" /><circle cx="14.500" cy="3.500" r="1.800" /><circle cx="3.500" cy="13" r="1.800" /></Icon>
    </SideButton>
    <SideButton aria-label="查阅">
      <Icon s={18}><path d="M8 15.500c-2-1-4-1-6.500-.5V2c3-.5 5-.5 7.500 1 2.500-1.500 4.500-1.500 7.500-1v6M9 3v5" /><circle cx="12.500" cy="12" r="3.500" /><path d="M15 14.500l2.500 2.500" /></Icon>
    </SideButton>
    <SideButton aria-label="帮助">
      <Icon s={18}><circle cx="9" cy="9" r="8" /><path d="M6.500 7c0-3.500 5-3.500 5 0 0 1.500-2.500 1.500-2.500 4M9 12.500v1.500" /></Icon>
    </SideButton>
    <SideButton aria-label="更多">
      <Icon s={18}><circle cx="3" cy="9" r="1.500" /><circle cx="9" cy="9" r="1.500" /><circle cx="15" cy="9" r="1.500" /></Icon>
    </SideButton>
  </SideBar>
);

const Status = () => (
  <StatusBar>
    <StatusButton aria-label="宏">
      <Icon s={16}><path d="M1 2l1.500 4L4 2M6.500 2v4h2.500V2zM6.500 4H9M10.500 2.500h4v3h-2v8h-9v-4h7v3M5.500 9.500v-2" /></Icon>
    </StatusButton>
    <StatusButton $push aria-label="护眼模式">
      <Icon s={16}><path d="M1 8c3-6 11-6 14 0-3 6-11 6-14 0z" /><circle cx="8" cy="8" r="2.500" /></Icon>
    </StatusButton>
    <SplitTool aria-label="阅读模式">
      <Icon><path d="M8.500 8.500h3v3h-3zM7.500 6.500v-3h5v3M7.500 13.500v3h5v-3M6.500 7.500h-3v5h3M13.500 7.500h3v5h-3" /></Icon><Caret />
    </SplitTool>
    <VLine $h={14} />
    <StatusButton $on aria-label="普通视图"><Icon s={16}><path d="M1.500 2.500h13v11h-13zM1.500 6.500h13M5.500 2.500v11M5.500 9.500h9" /></Icon></StatusButton>
    <StatusButton aria-label="分页预览"><Icon s={16}><path d="M1.500 2.500h13v11h-13zM7.500 2.500v11" /></Icon></StatusButton>
    <StatusButton aria-label="页面布局"><Icon s={16}><path d="M1.500 2.500h9v7h-9zM14.500 2v11.500h-13M12.500 2v9.500h-11" /></Icon></StatusButton>
    <VLine $h={14} />
    <ZoomButton>205%<Caret /></ZoomButton>
    <StatusButton aria-label="缩小"><Icon s={12} w={2}><path d="M0 6h12" /></Icon></StatusButton>
    <ZoomRange type="range" aria-label="显示比例" min={0} max={100} defaultValue={50} />
    <StatusButton aria-label="放大"><Icon s={12} w={2}><path d="M0 6h12M6 0v12" /></Icon></StatusButton>
  </StatusBar>
);

export default function App() {
  return (
    <Window>
      <GlobalStyle />
      <Title />
      <Menu />
      <Ribbon aria-label="开始">
        <ClipboardGroup />
        <Divider />
        <FontGroup />
        <Divider />
        <AlignGroup />
        <Divider />
        <NumberGroup />
        <Divider />
        <RowsColsGroup />
        <Divider />
        <StyleGroup />
        <Divider />
        <EditGroup />
      </Ribbon>
      <Body>
        <Editor>
          <FormulaRow>
            <FieldBox $w={162}>
              <NameInput aria-label="名称框" defaultValue="A1" />
              <BarButton $w={22} aria-label="名称列表"><ThinCaret /></BarButton>
            </FieldBox>
            <FieldBox>
              <BarButton $w={28} aria-label="浏览公式">
                <Icon s={18}><circle cx="8" cy="8" r="6" /><path d="M12.500 12.500l4 4M5.500 6.500h5M5.500 9.500h5" /></Icon>
              </BarButton>
              <BarButton $w={28} aria-label="插入函数"><Fx>fx</Fx></BarButton>
              <Row $pl={4}><VLine /></Row>
              <FormulaInput aria-label="编辑栏" defaultValue="产品" />
            </FieldBox>
          </FormulaRow>
          <Sheet />
          <Tabs />
        </Editor>
        <SelectionPane />
        <Tools />
      </Body>
      <Status />

      <Pointer $x={314} $y={61} width="70" height="86" viewBox="0 0 70 86" aria-hidden="true">
        <path d="M18 22L68 84" stroke="#fe0000" strokeWidth="4" strokeLinecap="round" />
        <path d="M0 0L23 16 17 18 12 24z" fill="#fe0000" stroke="#fe0000" />
      </Pointer>
      <Pointer $x={1178} $y={135} width="26" height="82" viewBox="0 0 26 82" aria-hidden="true">
        <path d="M19 24L3 79" stroke="#fe0000" strokeWidth="3" strokeLinecap="round" />
        <path d="M24 1L24 27 19 24 12 23z" fill="#fe0000" stroke="#fe0000" />
      </Pointer>

      <ImeBadge>
        <span>CH</span>
        <Icon s={14}><path d="M7 1.500c5 0 7 6 3 9-3 2-6 1-7-1 4 1 6-3 4-8z" /></Icon>
        <span>简</span>
      </ImeBadge>
      <Watermark>
        <Svg width="44" height="42" viewBox="0 0 44 42" aria-hidden="true">
          <path d="M43 1C22 2 3 12 1 24c0 5 3 8 7 9C5 22 18 8 43 1z" fill="#4d8fcd" stroke="none" />
          <path d="M31 6C15 10 8 22 13 28c3 3 8 1 14-5-2 1-6 1-6-3 0-6 6-11 10-14z" fill="#55bde8" stroke="none" />
          <path d="M36 14c9 3 7 14-3 20-8 5-18 6-26 4 12-2 22-8 26-14 2-4 3-7 3-10z" fill="#62bb6a" stroke="none" />
          <path d="M7 38c8 0 15-3 20-7-3 6-10 9-20 7z" fill="#c4d65a" stroke="none" />
        </Svg>
        <WatermarkText>
          极光下载站
          <WatermarkUrl>www.xz7.com</WatermarkUrl>
        </WatermarkText>
      </Watermark>
    </Window>
  );
}
